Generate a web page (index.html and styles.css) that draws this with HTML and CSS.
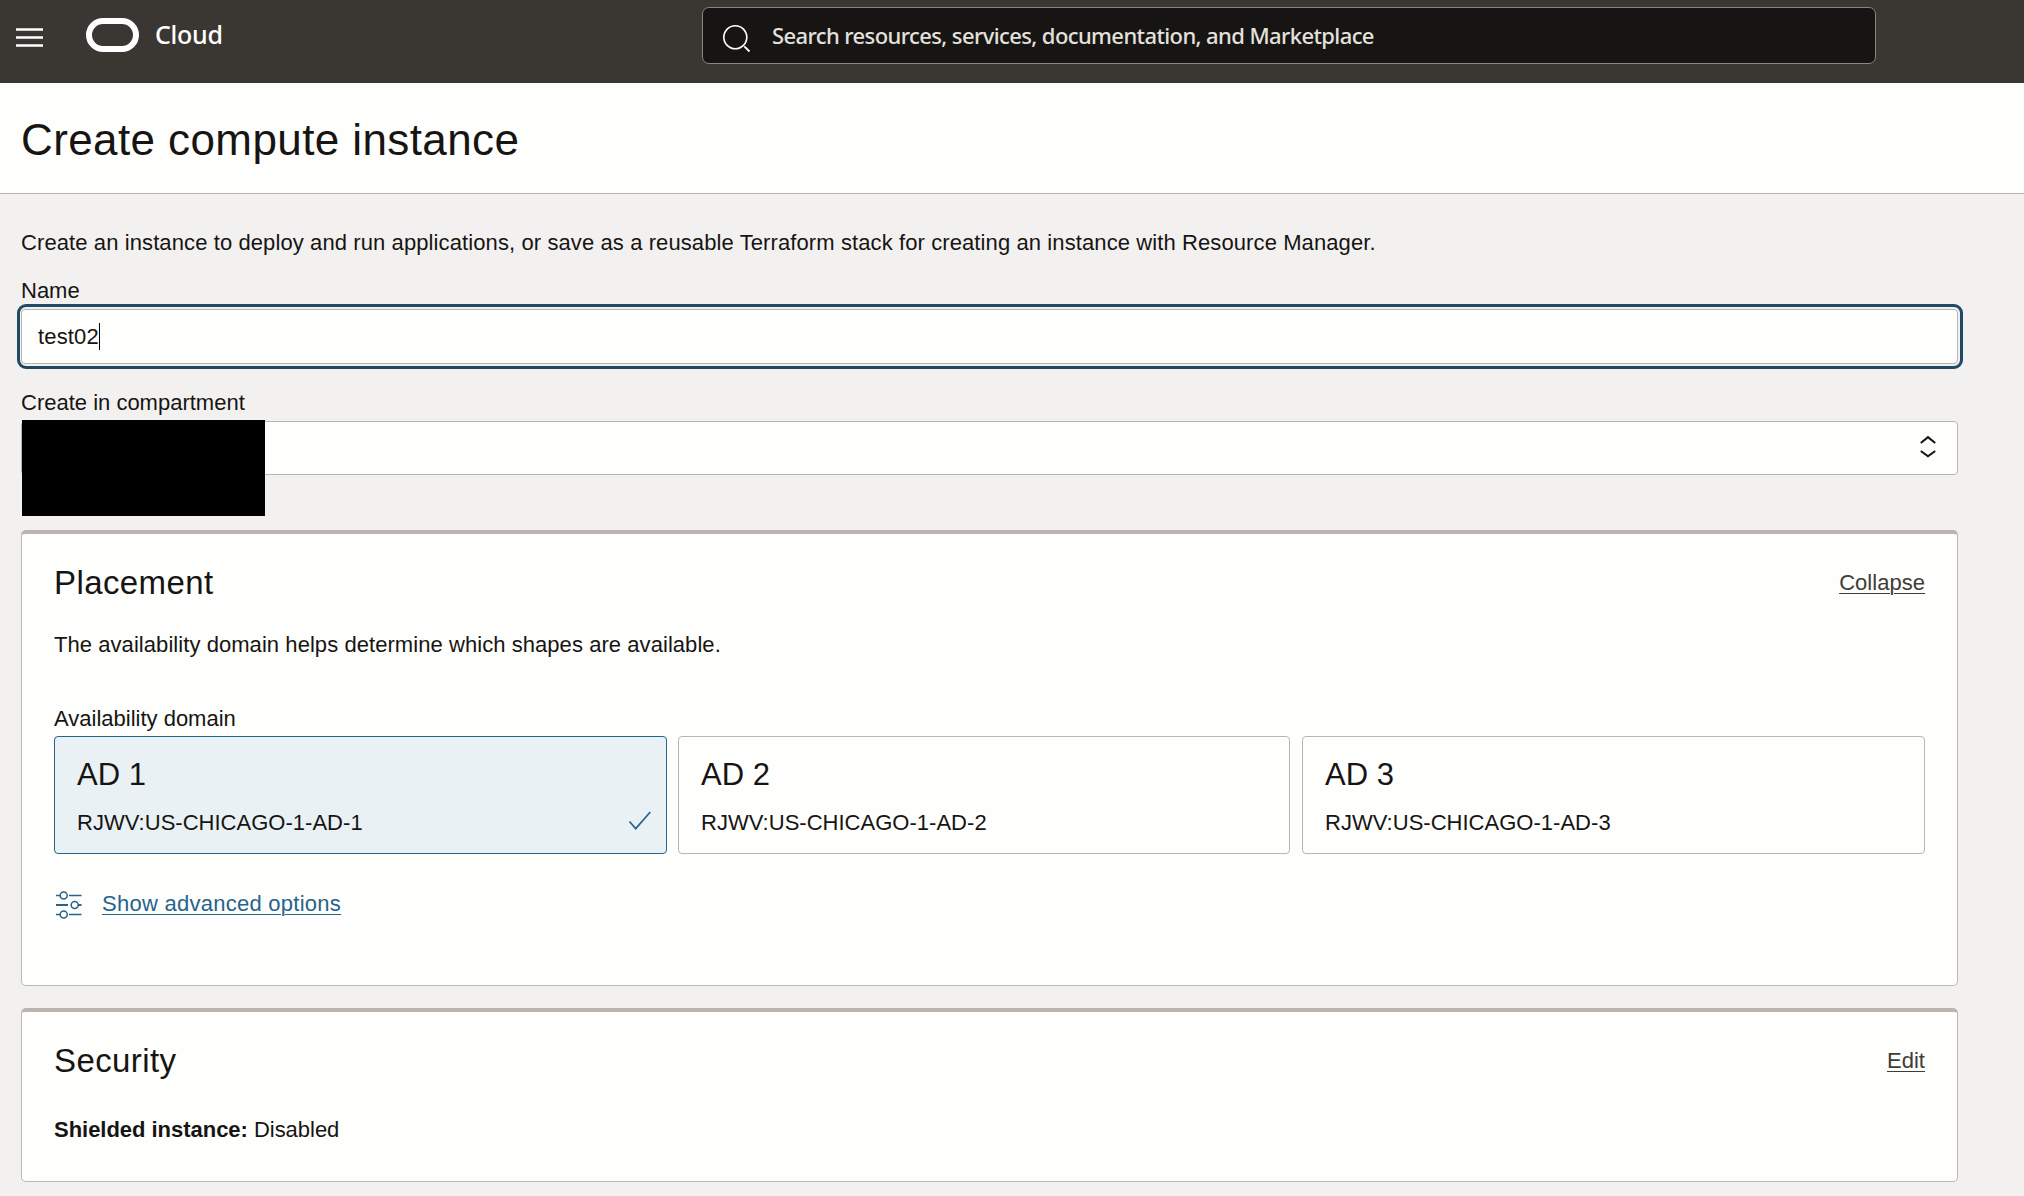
FILE: index.html
```html
<!DOCTYPE html>
<html lang="en">
<head>
<meta charset="utf-8">
<title>Create compute instance</title>
<link rel="stylesheet" href="styles.css">
</head>
<body>
<header class="topbar">
  <div class="brand">
    <svg class="menu-icon" width="27" height="19" viewBox="0 0 27 19"><path d="M0 1.5h27M0 9.5h27M0 17.5h27" stroke="#fff" stroke-width="2.4"/></svg>
    <svg class="logo" width="53" height="34" viewBox="0 0 53 34"><rect x="3" y="3" width="47" height="28" rx="14" fill="none" stroke="#fff" stroke-width="6"/></svg>
    <span class="brand-name">Cloud</span>
  </div>
  <div class="search">
    <svg class="search-icon" width="28" height="28" viewBox="0 0 28 28"><path d="M21.3 21.3L26.5 26.5" stroke="#fff" stroke-width="1.8"/><circle cx="12.3" cy="12.3" r="11.5" fill="none" stroke="#fff" stroke-width="1.6"/></svg>
    <span class="search-text">Search resources, services, documentation, and Marketplace</span>
  </div>
</header>
<div class="title-band"><h1>Create compute instance</h1></div>
<main>
  <p class="intro">Create an instance to deploy and run applications, or save as a reusable Terraform stack for creating an instance with Resource Manager.</p>
  <div class="label name-label">Name</div>
  <div class="focus-ring"><div class="input"><span>test02</span><i class="caret"></i></div></div>
  <div class="label comp-label">Create in compartment</div>
  <div class="select">
    <div class="redacted"></div>
    <svg width="16" height="24" viewBox="0 0 16 24"><path d="M.8 8L8 2.2L15.2 8M.8 16L8 21.3L15.2 16" fill="none" stroke="#161513" stroke-width="2.1"/></svg>
  </div>

  <section class="card placement">
    <div class="card-head"><h2>Placement</h2><a>Collapse</a></div>
    <p class="help">The availability domain helps determine which shapes are available.</p>
    <div class="label ad-label">Availability domain</div>
    <div class="domains">
      <div class="domain selected"><h3>AD 1</h3><p>RJWV:US-CHICAGO-1-AD-1</p>
        <svg class="check" width="24" height="20" viewBox="0 0 24 20"><path d="M1.5 10.5L7.7 17.6L22.3 1" fill="none" stroke="#26648c" stroke-width="1.7"/></svg>
      </div>
      <div class="domain"><h3>AD 2</h3><p>RJWV:US-CHICAGO-1-AD-2</p></div>
      <div class="domain"><h3>AD 3</h3><p>RJWV:US-CHICAGO-1-AD-3</p></div>
    </div>
    <div class="advanced">
      <svg width="28" height="30" viewBox="0 0 28 30" fill="none" stroke="#26648c"><path d="M1 5.5h4M14 5.5h12.5M1 24.5h4M14 24.5h12.5" stroke-width="1.3"/><path d="M1 15h12M23 15h3.5" stroke-width="2"/><circle cx="8.7" cy="5.5" r="3.5" stroke-width="1.5"/><circle cx="19.7" cy="15" r="3.5" stroke-width="1.5"/><circle cx="8.7" cy="24.5" r="3.5" stroke-width="1.5"/></svg>
      <a>Show advanced options</a>
    </div>
  </section>

  <section class="card security">
    <div class="card-head"><h2>Security</h2><a>Edit</a></div>
    <p class="shielded"><strong>Shielded instance:</strong> Disabled</p>
  </section>
</main>
</body>
</html>
```
FILE: styles.css
```css
* { box-sizing: border-box; }
body {
  margin: 0;
  height: 1196px;
  overflow: hidden;
  background: #f3f1f0;
  color: #161513;
  font: 22px/28px "Liberation Sans", Arial, sans-serif;
}
h1, h2, h3, p { margin: 0; font-weight: 400; }

.topbar {
  display: flex;
  height: 83px;
  background: #3a3631;
  color: #fff;
  font-family: "Noto Sans", sans-serif;
  font-weight: 500;
}
.brand { display: flex; align-items: flex-start; width: 702px; padding-left: 16px; }
.menu-icon { margin-top: 28px; }
.logo { margin: 18px 0 0 43px; }
.brand-name { margin: 18px 0 0 16px; font-size: 25px; line-height: 32px; letter-spacing: -0.3px; }
.search {
  display: flex;
  width: 1174px;
  height: 57px;
  margin-top: 7px;
  padding-left: 20px;
  border: 1px solid #8b8580;
  border-radius: 7px;
  background: #161513;
}
.search-icon { margin-top: 17px; }
.search-text { margin: 13px 0 0 21px; color: #e4e1dd; letter-spacing: -0.6px; }

.title-band {
  height: 111px;
  padding: 32px 0 0 21px;
  border-bottom: 1px solid #b8b4b0;
  background: #fefefc;
}
h1 { font-size: 44px; line-height: 50px; letter-spacing: 0.4px; }

main { width: 1958px; padding-left: 21px; }
.intro { margin-top: 35px; letter-spacing: 0.1px; }
.name-label { margin-top: 20px; }
.focus-ring {
  height: 65px;
  margin: -1px -5px 0 -4px;
  padding: 2px 2px 2px 1px;
  border: 3px solid #1e4a63;
  border-radius: 9px;
}
.input {
  display: flex;
  align-items: center;
  height: 55px;
  padding-left: 16px;
  border: 1px solid #bbb3af;
  border-radius: 4px;
  background: #fefefc;
  letter-spacing: 0.15px;
}
.caret { width: 1px; height: 27px; background: #000; }
.comp-label { margin-top: 20px; }
.select {
  display: flex;
  justify-content: space-between;
  height: 54px;
  margin-top: 4px;
  padding-right: 21px;
  border: 1px solid #bbb5b0;
  border-radius: 4px;
  background: #fefefc;
}
.select svg { margin-top: 13px; }
.redacted { width: 243px; height: 96px; margin-top: -2px; background: #000; }

.card {
  border: 1px solid #bbb7b2;
  border-top: 4px solid #bbb5b0;
  border-radius: 5px;
  background: #fefefc;
  padding: 0 32px;
}
.placement { height: 456px; margin-top: 55px; }
.security { height: 174px; margin-top: 22px; }
.card-head { display: flex; justify-content: space-between; padding-top: 29px; }
h2 { font-size: 33px; line-height: 40px; letter-spacing: 0.4px; }
.card-head a { margin-top: 6px; color: #403c38; letter-spacing: 0.03px; }
a { text-decoration: underline; text-decoration-thickness: 1px; text-underline-offset: 3px; }
.help { margin-top: 28px; letter-spacing: 0.06px; }
.ad-label { margin-top: 46px; }
.domains { display: grid; grid-template-columns: 613px 613px 623px; column-gap: 11px; margin-top: 3px; }
.domain {
  position: relative;
  height: 118px;
  padding: 19px 22px 0;
  border: 1px solid #bbb5b0;
  border-radius: 4px;
}
.domain:nth-child(2) { margin-right: 1px; }
.domain p { margin-top: 15px; letter-spacing: 0.02px; }
.domain.selected { border-color: #26648c; background: #e9f1f5; }
h3 { font-size: 31px; line-height: 38px; }
.check { position: absolute; right: 14px; bottom: 22px; }
.advanced { display: flex; gap: 19px; margin-top: 36px; padding-left: 1px; color: #26648c; letter-spacing: 0.26px; }
.shielded { margin-top: 35px; letter-spacing: -0.03px; }
```
